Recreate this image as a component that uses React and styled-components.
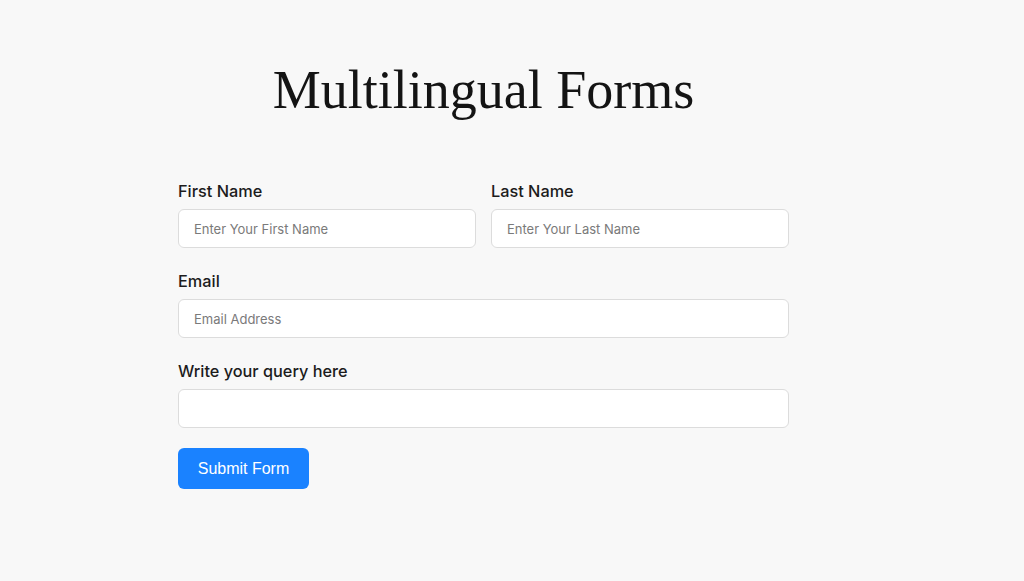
import styled, { createGlobalStyle } from "styled-components";

const GlobalStyle = createGlobalStyle`
	body {
		margin: 0;
		background: #f8f8f8;
		font-family: Inter, "Liberation Sans", sans-serif;
	}
`;

const fields = [
	[
		{ label: "First Name", placeholder: "Enter Your First Name" },
		{ label: "Last Name", placeholder: "Enter Your Last Name" }
	],
	[{ label: "Email", placeholder: "Email Address" }],
	[{ label: "Write your query here", placeholder: "" }]
];

const App = () => {
	return (
		<>
			<GlobalStyle />
			<Page>
				<Wrapper>
					<Title>Multilingual Forms</Title>
					<Form onSubmit={(e) => e.preventDefault()}>
						{fields.map((row, i) => (
							<Row key={i} columns={row.length}>
								{row.map((f) => (
									<Field key={f.label}>
										<Label>{f.label}</Label>
										<Input placeholder={f.placeholder} />
									</Field>
								))}
							</Row>
						))}
						<SubmitButton type="submit">Submit Form</SubmitButton>
					</Form>
				</Wrapper>
			</Page>
		</>
	);
};

export default App;

const Page = styled.div`
	min-height: 581px;
	padding: 62px 0 0 178px;
	box-sizing: border-box;
`;

const Wrapper = styled.div`
	width: 611px;
`;

const Title = styled.h1`
	margin: 0 0 63px;
	text-align: center;
	font-family: "Liberation Serif", serif;
	font-weight: 400;
	font-size: 54px;
	line-height: 56px;
	color: #141414;
`;

const Form = styled.form`
	display: flex;
	flex-direction: column;
`;

const Row = styled.div`
	display: grid;
	grid-template-columns: repeat(${(p) => p.columns}, 1fr);
	column-gap: 15px;
	margin-bottom: 23px;
`;

const Field = styled.div`
	display: flex;
	flex-direction: column;
`;

const Label = styled.label`
	font-size: 16.3px;
	line-height: 20px;
	font-weight: 500;
	color: #1c1c1c;
	margin-bottom: 8px;
`;

const Input = styled.input`
	height: 39px;
	box-sizing: border-box;
	padding: 0 15px;
	border: 1px solid #dcdcdc;
	border-radius: 6px;
	background: #fff;
	font-family: Inter, "Liberation Sans", sans-serif;
	font-size: 13px;
	color: #222;
	outline: none;

	&::placeholder {
		color: #7a7a7a;
	}
`;

const SubmitButton = styled.button`
	align-self: flex-start;
	width: 131px;
	height: 41px;
	margin-top: -3px;
	border: none;
	border-radius: 6px;
	background: #1a82ff;
	color: #fff;
	font-family: "Liberation Sans", Arial, sans-serif;
	font-size: 16px;
	cursor: pointer;
`;
